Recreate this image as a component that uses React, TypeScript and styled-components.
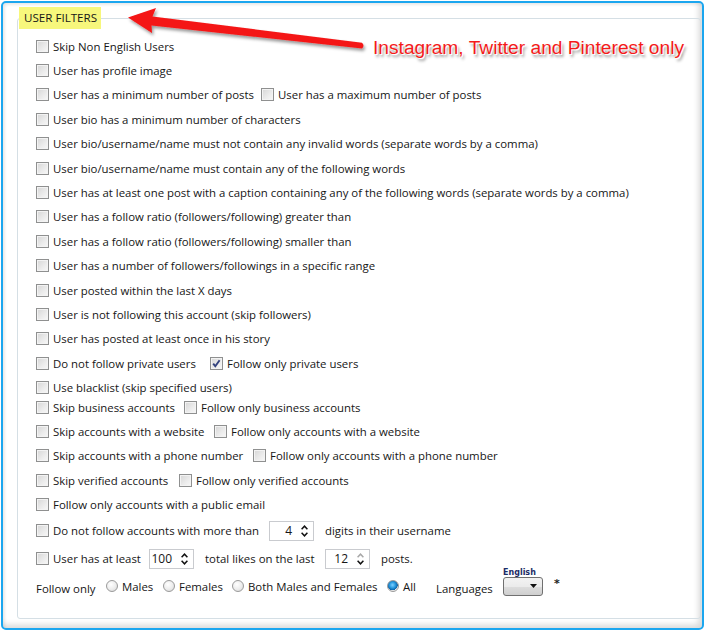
import React from 'react';
import styled, { createGlobalStyle } from 'styled-components';

const Global = createGlobalStyle`
  html, body { margin: 0; padding: 0; background: #ffffff; }
  body { font-family: "Open Sans", "Noto Sans", sans-serif; font-size: 11.4px; color: #161616; }
`;

const Frame = styled.div`
  position: relative;
  box-sizing: border-box;
  width: 703px;
  height: 629px;
  margin: 1px 0 0 1px;
  border: 2px solid #1ba6ef;
  border-radius: 5px;
  padding: 4px 0 0 14px;
  background: #fff;
  box-shadow: inset -3px -3px 6px rgba(0, 0, 0, 0.16), inset 2px 2px 3px rgba(0, 0, 0, 0.07);
`;

const Group = styled.fieldset`
  box-sizing: border-box;
  width: 684px;
  height: 612px;
  margin: 0;
  padding: 0 0 0 18px;
  border: 1px solid #d5dfe5;
  border-radius: 3px;
  min-width: 0;
`;

const Legend = styled.legend`
  box-sizing: border-box;
  margin-left: -17px;
  width: 82px;
  padding: 0 0 0 5px;
  height: 22px;
  line-height: 22px;
  background: #f7f77c;
  font-size: 11.6px;
  color: #161616;
`;

const Body = styled.div`
  padding-top: 5px;
  display: flex;
  flex-direction: column;
`;

const Row = styled.div<{ $mt?: number }>`
  height: 24.4px;
  margin-top: ${(p) => p.$mt ?? 0}px;
  display: flex;
  align-items: center;
  white-space: nowrap;
`;

const CheckLabel = styled.label<{ $w?: number }>`
  display: flex;
  align-items: center;
  flex: none;
  width: ${(p) => (p.$w ? `${p.$w}px` : 'auto')};
`;

const Box = styled.span`
  position: relative;
  box-sizing: border-box;
  flex: none;
  width: 13px;
  height: 13px;
  border: 1px solid #8f9090;
  background: linear-gradient(135deg, #d6d6d6 0%, #ececec 60%, #f8f8f8 100%);
  box-shadow: inset 0 0 0 1px #f3f3f3;
  margin-right: 4px;
  svg { position: absolute; left: 0; top: 0; }
`;

const Text = styled.span<{ $ml?: number; $w?: number; $dy?: number }>`
  flex: none;
  margin-left: ${(p) => p.$ml ?? 0}px;
  width: ${(p) => (p.$w ? `${p.$w}px` : 'auto')};
  position: relative;
  top: ${(p) => p.$dy ?? 0}px;
`;

const SpinBox = styled.div`
  box-sizing: border-box;
  flex: none;
  width: 45px;
  height: 20px;
  border: 1px solid #c9cbcf;
  display: flex;
  align-items: center;
  padding-right: 5px;
  background: #fff;
`;

const SpinValue = styled.span`
  flex: 1;
  text-align: right;
  padding-right: 9px;
  font-size: 12px;
`;

const RadioLabel = styled.label<{ $w: number }>`
  display: flex;
  align-items: center;
  flex: none;
  width: ${(p) => p.$w}px;
`;

const RadioDot = styled.span<{ $on?: boolean }>`
  box-sizing: border-box;
  flex: none;
  width: 12px;
  height: 12px;
  border-radius: 50%;
  border: 1px solid #9a9a9a;
  background: ${(p) =>
    p.$on
      ? 'radial-gradient(circle at 45% 40%, #7fd0ff 0%, #2a9be0 35%, #0d63a8 62%, #e8e8e8 66%, #f7f7f7 100%)'
      : 'radial-gradient(circle at 40% 35%, #ffffff 0%, #ececec 55%, #d2d2d2 100%)'};
  margin-right: 4px;
`;

const DropWrap = styled.div`
  position: relative;
  flex: none;
`;

const DropCaption = styled.span`
  position: absolute;
  left: 0;
  bottom: 100%;
  margin-bottom: -1px;
  font-family: "DejaVu Sans", "Liberation Sans", sans-serif;
  font-weight: bold;
  font-size: 8px;
  color: #1b2c66;
  line-height: 10px;
`;

const Drop = styled.div`
  box-sizing: border-box;
  width: 40px;
  height: 19px;
  border: 1px solid #707070;
  border-radius: 3px;
  background: linear-gradient(#f3f3f3 0%, #ebebeb 50%, #dddddd 51%, #cfcfcf 100%);
  display: flex;
  align-items: center;
  justify-content: flex-end;
  padding-right: 5px;
`;

const Star = styled.span`
  flex: none;
  margin-left: 11px;
  position: relative;
  top: -3px;
  font-family: "DejaVu Sans", sans-serif;
  font-weight: bold;
  font-size: 11px;
  color: #222;
`;

const Callout = styled.div`
  position: absolute;
  left: 370px;
  top: 35px;
  font-family: "Liberation Sans", Arial, sans-serif;
  font-size: 19.2px;
  line-height: 19px;
  color: #f41a1a;
  white-space: nowrap;
  text-shadow: 0 0 1px #fff, 1px 1px 0 #fff, 2px 3px 3px rgba(0, 0, 0, 0.45);
  pointer-events: none;
`;

const ArrowSvg = styled.svg`
  position: absolute;
  left: -3px;
  top: -3px;
  pointer-events: none;
`;

const Check = ({ label, w, on }: { label: string; w?: number; on?: boolean }) => (
  <CheckLabel $w={w}>
    <Box>
      {on && (
        <svg width="11" height="11" viewBox="0 0 11 11">
          <path d="M2.2 5.6 L4.3 8.2 L8.6 2.2" fill="none" stroke="#33427e" strokeWidth="1.9" />
        </svg>
      )}
    </Box>
    <span>{label}</span>
  </CheckLabel>
);

const Arrows = ({ upDisabled }: { upDisabled?: boolean }) => (
  <svg width="7" height="12" viewBox="0 0 7 12">
    <polyline points="0.6,4.2 3.5,1.2 6.4,4.2" fill="none" stroke={upDisabled ? '#a8a8a8' : '#111'} strokeWidth="1.5" />
    <polyline points="0.6,7.8 3.5,10.8 6.4,7.8" fill="none" stroke="#111" strokeWidth="1.5" />
  </svg>
);

const Spinner = ({ value, upDisabled }: { value: string; upDisabled?: boolean }) => (
  <SpinBox>
    <SpinValue>{value}</SpinValue>
    <Arrows upDisabled={upDisabled} />
  </SpinBox>
);

const Radio = ({ label, w, on }: { label: string; w: number; on?: boolean }) => (
  <RadioLabel $w={w}>
    <RadioDot $on={on} />
    <span>{label}</span>
  </RadioLabel>
);

type Item = { label: string; w?: number; on?: boolean };
type RowDef = { items: Item[]; mt?: number };

const rows: RowDef[] = [
  { items: [{ label: 'Skip Non English Users' }] },
  { items: [{ label: 'User has profile image' }] },
  { items: [{ label: 'User has a minimum number of posts', w: 225 }, { label: 'User has a maximum number of posts' }] },
  { items: [{ label: 'User bio has a minimum number of characters' }] },
  { items: [{ label: 'User bio/username/name must not contain any invalid words (separate words by a comma)' }] },
  { items: [{ label: 'User bio/username/name must contain any of the following words' }] },
  { items: [{ label: 'User has at least one post with a caption containing any of the following words (separate words by a comma)' }] },
  { items: [{ label: 'User has a follow ratio (followers/following) greater than' }] },
  { items: [{ label: 'User has a follow ratio (followers/following) smaller than' }] },
  { items: [{ label: 'User has a number of followers/followings in a specific range' }] },
  { items: [{ label: 'User posted within the last X days' }] },
  { items: [{ label: 'User is not following this account (skip followers)' }] },
  { items: [{ label: 'User has posted at least once in his story' }] },
  { items: [{ label: 'Do not follow private users', w: 174 }, { label: 'Follow only private users', on: true }] },
  { items: [{ label: 'Use blacklist (skip specified users)' }] },
  { mt: -5, items: [{ label: 'Skip business accounts', w: 148 }, { label: 'Follow only business accounts' }] },
  { items: [{ label: 'Skip accounts with a website', w: 178 }, { label: 'Follow only accounts with a website' }] },
  { items: [{ label: 'Skip accounts with a phone number', w: 217 }, { label: 'Follow only accounts with a phone number' }] },
  { items: [{ label: 'Skip verified accounts', w: 143 }, { label: 'Follow only verified accounts' }] },
  { items: [{ label: 'Follow only accounts with a public email' }] },
];

export default function App() {
  return (
    <>
      <Global />
      <Frame>
        <Group>
          <Legend>USER FILTERS</Legend>
          <Body>
            {rows.map((r, i) => (
              <Row key={i} $mt={r.mt}>
                {r.items.map((it, j) => (
                  <Check key={j} label={it.label} w={it.w} on={it.on} />
                ))}
              </Row>
            ))}
            <Row $mt={1.5}>
              <Check label="Do not follow accounts with more than" w={233} />
              <Spinner value="4" />
              <Text $ml={11}>digits in their username</Text>
            </Row>
            <Row $mt={4}>
              <Check label="User has at least" w={113} />
              <Spinner value="100" />
              <Text $ml={11} $w={120}>total likes on the last</Text>
              <Spinner value="12" upDisabled />
              <Text $ml={11}>posts.</Text>
            </Row>
            <Row $mt={3}>
              <Text $w={70} $dy={2}>Follow only</Text>
              <Radio label="Males" w={57} />
              <Radio label="Females" w={69} />
              <Radio label="Both Males and Females" w={155} />
              <Radio label="All" w={49} on />
              <Text $w={67} $dy={2}>Languages</Text>
              <DropWrap>
                <DropCaption>English</DropCaption>
                <Drop>
                  <svg width="7" height="4" viewBox="0 0 7 4">
                    <polygon points="0,0 7,0 3.5,4" fill="#111" />
                  </svg>
                </Drop>
              </DropWrap>
              <Star>*</Star>
            </Row>
          </Body>
        </Group>
        <ArrowSvg width="400" height="70" viewBox="0 0 400 70">
          <defs>
            <filter id="sh" x="-10%" y="-50%" width="120%" height="200%">
              <feDropShadow dx="1.5" dy="2.5" stdDeviation="1.6" floodColor="#000" floodOpacity="0.4" />
            </filter>
          </defs>
          <path
            d="M128 17.5 L156 8 L152.5 16.5 L362 42.8 Q365 45.6 362 48.4 L151.5 25.5 L152 33 Z"
            fill="#f41616"
            filter="url(#sh)"
          />
        </ArrowSvg>
        <Callout>Instagram, Twitter and Pinterest only</Callout>
      </Frame>
    </>
  );
}
